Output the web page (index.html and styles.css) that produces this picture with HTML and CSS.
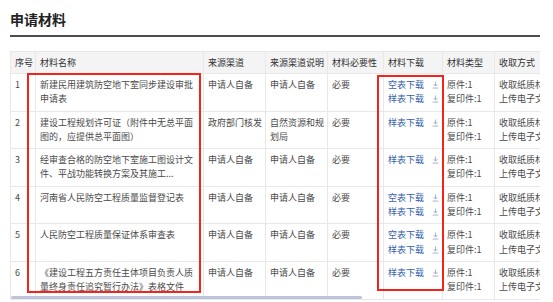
FILE: index.html
```html
<!DOCTYPE html>
<html lang="zh-CN">
<head>
<meta charset="utf-8">
<title>申请材料</title>
<link rel="stylesheet" href="styles.css">
</head>
<body>
<div class="page">
  <h2 class="title">申请材料</h2>
  <div class="table-wrap">
    <table class="mat-table">
      <colgroup>
        <col class="c-no"><col class="c-name"><col class="c-src"><col class="c-desc"><col class="c-need"><col class="c-dl"><col class="c-type"><col class="c-way">
      </colgroup>
      <thead>
        <tr><th>序号</th><th>材料名称</th><th>来源渠道</th><th>来源渠道说明</th><th>材料必要性</th><th>材料下载</th><th>材料类型</th><th class="clip">收取方式</th></tr>
      </thead>
      <tbody>
        <tr>
          <td>1</td><td>新建民用建筑防空地下室同步建设审批申请表</td><td>申请人自备</td><td>申请人自备</td><td>必要</td>
          <td><a class="dl">空表下载<svg class="ico" viewBox="0 0 8 9"><path d="M4 0.5V5.5M1.8 3.5L4 5.7L6.2 3.5M0.8 8H7.2" /></svg></a><a class="dl">样表下载<svg class="ico" viewBox="0 0 8 9"><path d="M4 0.5V5.5M1.8 3.5L4 5.7L6.2 3.5M0.8 8H7.2" /></svg></a></td>
          <td>原件:1<br>复印件:1</td><td class="clip">收取纸质材料<br>上传电子文件</td>
        </tr>
        <tr>
          <td>2</td><td>建设工程规划许可证（附件中无总平面图的，应提供总平面图）</td><td>政府部门核发</td><td>自然资源和规划局</td><td>必要</td>
          <td><a class="dl">样表下载<svg class="ico" viewBox="0 0 8 9"><path d="M4 0.5V5.5M1.8 3.5L4 5.7L6.2 3.5M0.8 8H7.2" /></svg></a></td>
          <td>原件:1<br>复印件:1</td><td class="clip">收取纸质材料<br>上传电子文件</td>
        </tr>
        <tr>
          <td>3</td><td>经审查合格的防空地下室施工图设计文件、平战功能转换方案及其施工...</td><td>申请人自备</td><td>申请人自备</td><td>必要</td>
          <td><a class="dl">样表下载<svg class="ico" viewBox="0 0 8 9"><path d="M4 0.5V5.5M1.8 3.5L4 5.7L6.2 3.5M0.8 8H7.2" /></svg></a></td>
          <td>原件:1<br>复印件:1</td><td class="clip">收取纸质材料<br>上传电子文件</td>
        </tr>
        <tr>
          <td>4</td><td>河南省人民防空工程质量监督登记表</td><td>申请人自备</td><td>申请人自备</td><td>必要</td>
          <td><a class="dl">空表下载<svg class="ico" viewBox="0 0 8 9"><path d="M4 0.5V5.5M1.8 3.5L4 5.7L6.2 3.5M0.8 8H7.2" /></svg></a><a class="dl">样表下载<svg class="ico" viewBox="0 0 8 9"><path d="M4 0.5V5.5M1.8 3.5L4 5.7L6.2 3.5M0.8 8H7.2" /></svg></a></td>
          <td>原件:1<br>复印件:1</td><td class="clip">收取纸质材料<br>上传电子文件</td>
        </tr>
        <tr>
          <td>5</td><td>人民防空工程质量保证体系审查表</td><td>申请人自备</td><td>申请人自备</td><td>必要</td>
          <td><a class="dl">空表下载<svg class="ico" viewBox="0 0 8 9"><path d="M4 0.5V5.5M1.8 3.5L4 5.7L6.2 3.5M0.8 8H7.2" /></svg></a><a class="dl">样表下载<svg class="ico" viewBox="0 0 8 9"><path d="M4 0.5V5.5M1.8 3.5L4 5.7L6.2 3.5M0.8 8H7.2" /></svg></a></td>
          <td>原件:1<br>复印件:1</td><td class="clip">收取纸质材料<br>上传电子文件</td>
        </tr>
        <tr>
          <td>6</td><td>《建设工程五方责任主体项目负责人质量终身责任追究暂行办法》表格文件</td><td>申请人自备</td><td>申请人自备</td><td>必要</td>
          <td><a class="dl">样表下载<svg class="ico" viewBox="0 0 8 9"><path d="M4 0.5V5.5M1.8 3.5L4 5.7L6.2 3.5M0.8 8H7.2" /></svg></a></td>
          <td>原件:1<br>复印件:1</td><td class="clip">收取纸质材料<br>上传电子文件</td>
        </tr>
      </tbody>
    </table>
    <div class="scroll-thumb"></div>
  </div>
  <div class="mark mark-name"></div>
  <div class="mark mark-dl"></div>
</div>
</body>
</html>
```

FILE: styles.css
```css
html, body {
  margin: 0;
  padding: 0;
  background: #fff;
}
body {
  font-family: "Noto Sans CJK SC", "Noto Sans", sans-serif;
  color: #4a4a4a;
  padding: 0 13px 0 10px;
}
.page {
  position: relative;
  width: 530px;
}
.title {
  margin: 0;
  padding: 9px 0 6px;
  font-size: 14px;
  line-height: 20px;
  font-weight: bold;
  color: #222;
  border-bottom: 2px solid #4d4d4d;
}
.table-wrap {
  position: relative;
  margin-top: 14px;
  width: 530px;
  overflow: hidden;
}
.mat-table {
  width: 530px;
  table-layout: fixed;
  border-collapse: collapse;
  font-size: 9px;
}
.c-no { width: 25px; }
.c-name { width: 168px; }
.c-src { width: 62px; }
.c-desc { width: 62px; }
.c-need { width: 56px; }
.c-dl { width: 59px; }
.c-type { width: 52px; }
.c-way { width: 46px; }
.mat-table th,
.mat-table td {
  border: 1px solid #e8e8e8;
  text-align: left;
  vertical-align: top;
}
.mat-table th:last-child,
.mat-table td:last-child {
  border-right: 0;
}
.mat-table th {
  background: #f4f4f4;
  font-weight: normal;
  color: #333;
  height: 21px;
  padding: 0 3px 0 4px;
  line-height: 21px;
  vertical-align: middle;
  white-space: nowrap;
}
.mat-table td {
  padding: 4px 3px 4px 4px;
  line-height: 14.3px;
  height: 28px;
  color: #4a4a4a;
}
.mat-table .clip {
  white-space: nowrap;
  overflow: hidden;
  padding-right: 0;
}
.dl {
  display: flex;
  align-items: center;
  color: #3560ad;
  text-decoration: none;
  white-space: nowrap;
}
.ico {
  width: 7px;
  height: 8px;
  margin-left: 8px;
  fill: none;
  stroke: #8d9cc0;
  stroke-width: 0.9;
}
.scroll-thumb {
  position: absolute;
  left: 1px;
  bottom: 1px;
  width: 351px;
  height: 3px;
  border-radius: 2px;
  background: #bcc3da;
}
.mark {
  position: absolute;
  border: 2px solid #f2241c;
  box-sizing: border-box;
}
.mark-name {
  left: 17px;
  top: 73px;
  width: 174px;
  height: 220px;
}
.mark-dl {
  left: 367px;
  top: 75px;
  width: 67px;
  height: 216px;
}
```
